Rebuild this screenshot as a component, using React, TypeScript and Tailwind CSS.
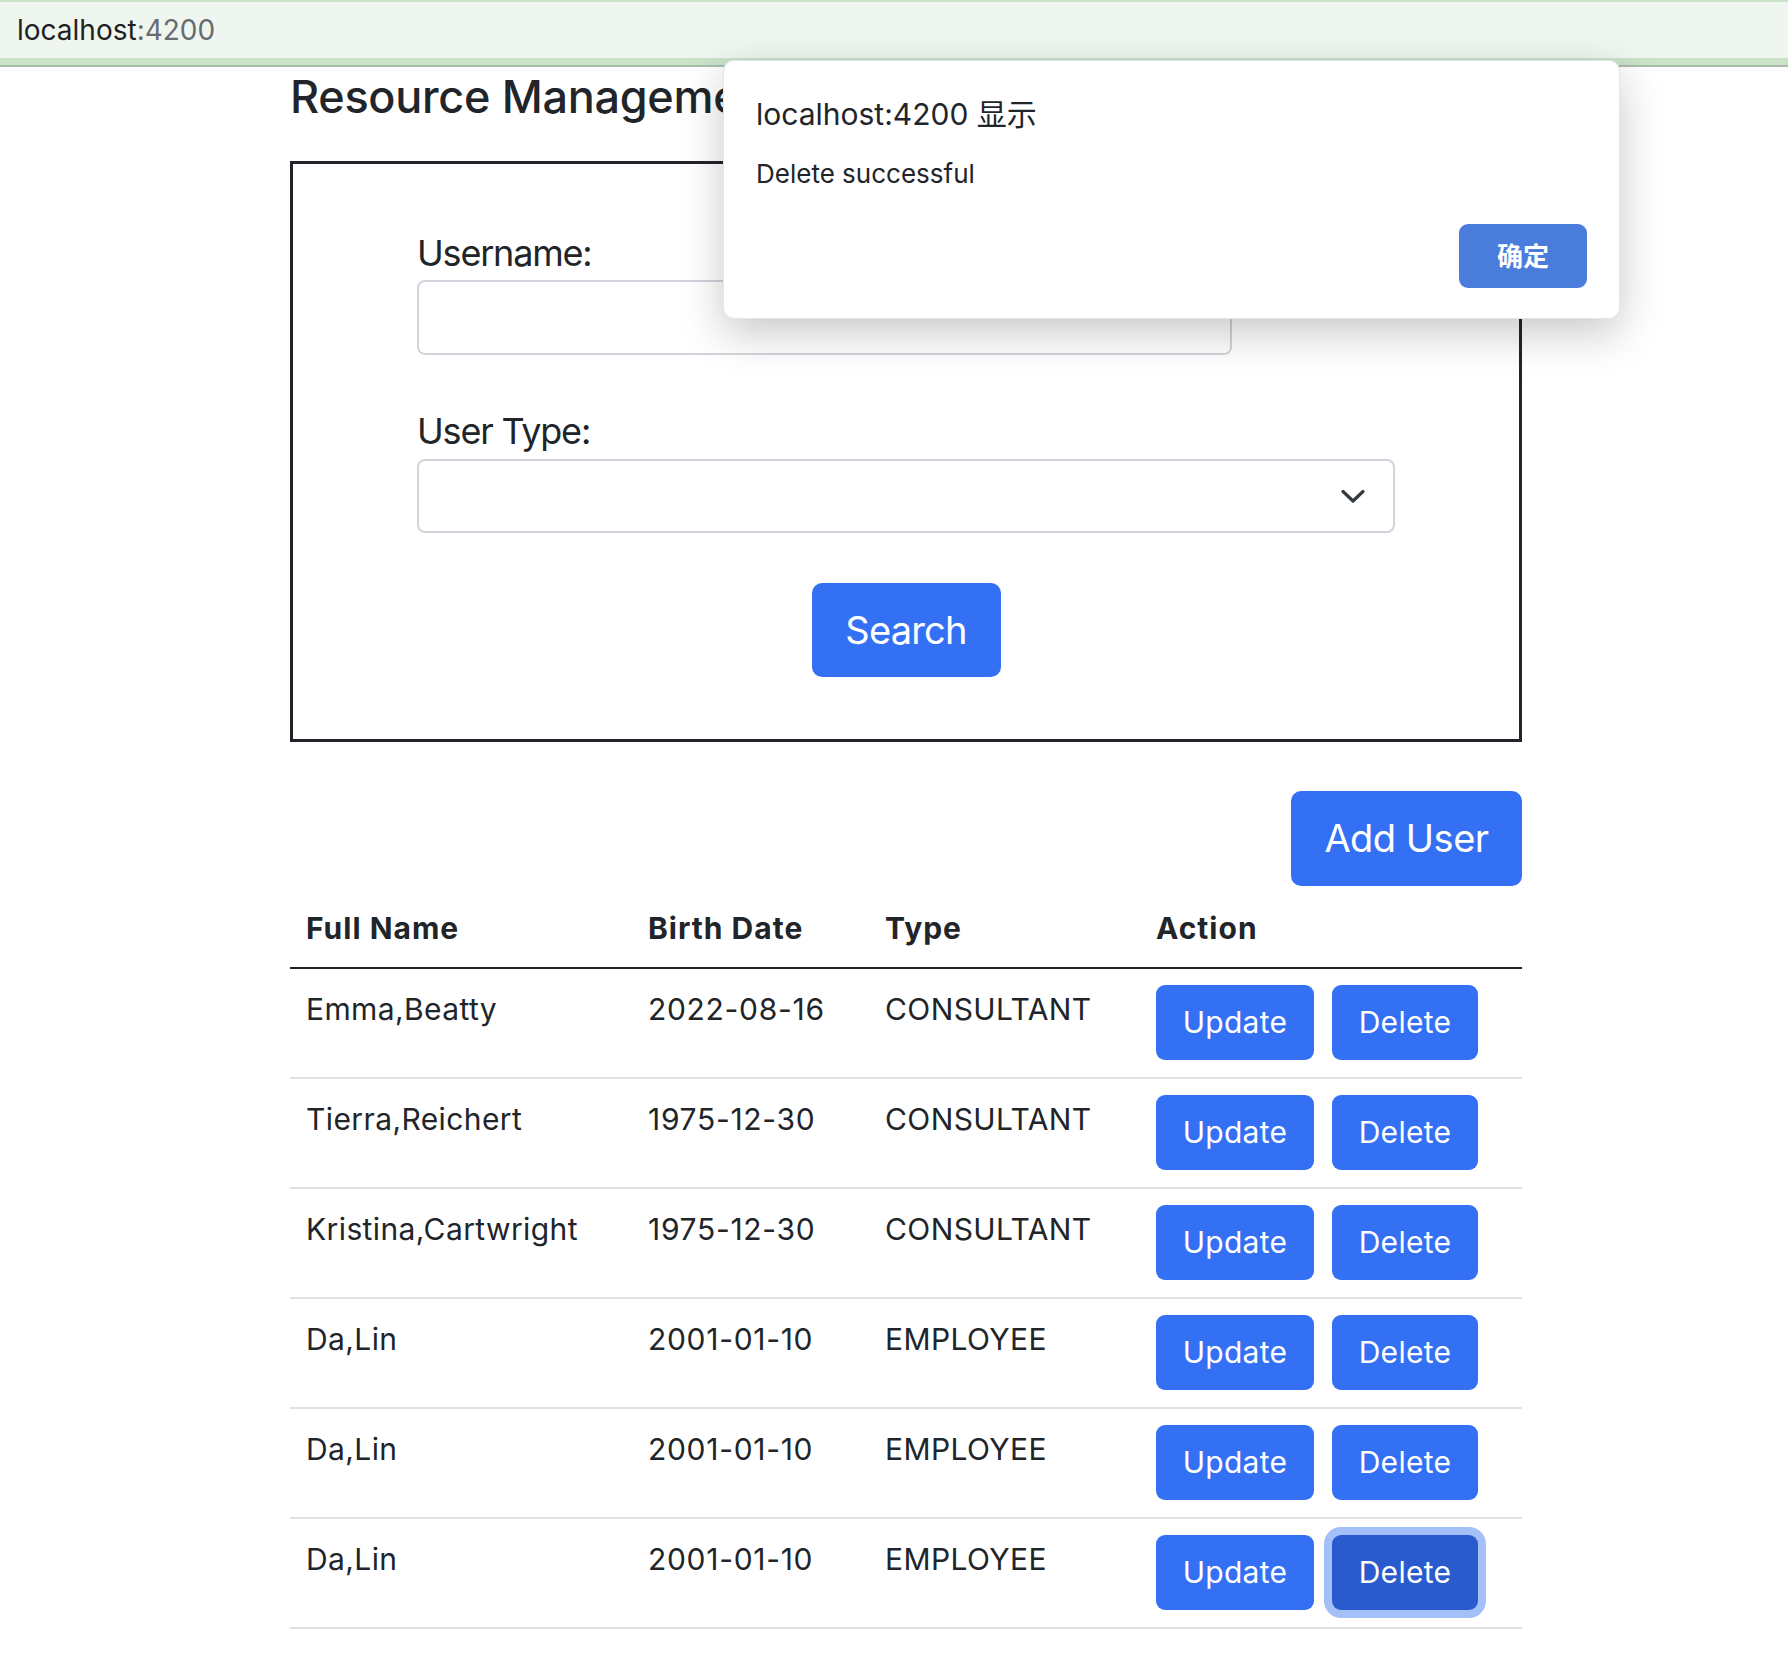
import React from "react";

type Row = { name: string; birth: string; type: string };

const rows: Row[] = [
  { name: "Emma,Beatty", birth: "2022-08-16", type: "CONSULTANT" },
  { name: "Tierra,Reichert", birth: "1975-12-30", type: "CONSULTANT" },
  { name: "Kristina,Cartwright", birth: "1975-12-30", type: "CONSULTANT" },
  { name: "Da,Lin", birth: "2001-01-10", type: "EMPLOYEE" },
  { name: "Da,Lin", birth: "2001-01-10", type: "EMPLOYEE" },
  { name: "Da,Lin", birth: "2001-01-10", type: "EMPLOYEE" },
];

function Chevron() {
  return (
    <svg width="24" height="15" viewBox="0 0 24 15" fill="none">
      <path d="M2 2.5 L12 12 L22 2.5" stroke="#343a40" strokeWidth="3.2" strokeLinecap="round" strokeLinejoin="round" />
    </svg>
  );
}

export default function App() {
  return (
    <div className="relative min-h-[1660px] w-[1788px] bg-white font-['Inter','Noto_Sans_CJK_SC',sans-serif] text-[#212529]">
      {/* browser bar */}
      <header>
        <div className="flex h-[58px] items-center border-t-2 border-[#c9e2c8] bg-[#eff6ef] pl-[17px]">
          <span className="text-[28px] text-[#1f1f1f]">
            localhost<span className="text-[#686c70]">:4200</span>
          </span>
        </div>
        <div className="h-[7px] bg-[#c9e2c8]" />
        <div className="h-[2px] bg-[#a9bca8]" />
      </header>

      <main className="ml-[290px] w-[1232px]">
        <h2 className="mt-[3px] text-[45px] font-medium leading-[54px] tracking-[-0.3px]">Resource Management</h2>

        <div className="mt-[37px] border-[3px] border-[#212529] px-[124px] pt-[62px] pb-[62px]">
          <label className="block text-[36px] leading-[54px] tracking-[-1.2px]">Username:</label>
          <div className="h-[75px] w-[815px] rounded-[8px] border-2 border-[#d0d5db] bg-white" />

          <label className="mt-[49px] block text-[36px] leading-[54px] tracking-[-1.2px]">User Type:</label>
          <div className="mt-[1px] flex h-[74px] w-full items-center justify-end rounded-[8px] border-2 border-[#d0d5db] bg-white pr-[28px]">
            <Chevron />
          </div>

          <div className="mt-[50px] flex justify-center">
            <button className="flex h-[94px] w-[189px] items-center justify-center rounded-[10px] bg-[#3470f4] text-[38px] text-white tracking-[-0.8px]">
              Search
            </button>
          </div>
        </div>

        <div className="mt-[49px] flex justify-end">
          <button className="flex h-[95px] w-[231px] items-center justify-center rounded-[10px] bg-[#3470f4] text-[38px] text-white tracking-[-0.5px]">
            Add User
          </button>
        </div>

        <table className="mt-[2px] w-full table-fixed border-collapse text-left">
          <colgroup>
            <col className="w-[342px]" />
            <col className="w-[237px]" />
            <col className="w-[271px]" />
            <col className="w-[382px]" />
          </colgroup>
          <thead>
            <tr className="border-b-2 border-[#212529]">
              <th className="px-[16px] pt-[16px] pb-[15px] text-[30px] font-bold leading-[48px] tracking-[1px]">Full Name</th>
              <th className="px-[16px] pt-[16px] pb-[15px] text-[30px] font-bold leading-[48px] tracking-[1px]">Birth Date</th>
              <th className="px-[16px] pt-[16px] pb-[15px] text-[30px] font-bold leading-[48px] tracking-[1px]">Type</th>
              <th className="px-[16px] pt-[16px] pb-[15px] text-[30px] font-bold leading-[48px] tracking-[1px]">Action</th>
            </tr>
          </thead>
          <tbody>
            {rows.map((r, i) => {
              const focused = i === rows.length - 1;
              return (
                <tr key={i} className="border-b-2 border-[#dee2e6]">
                  <td className="px-[16px] pt-[16px] pb-[17px] align-top text-[30px] leading-[48px] tracking-[0.4px]">{r.name}</td>
                  <td className="px-[16px] pt-[16px] pb-[17px] align-top text-[30px] leading-[48px] tracking-[0.7px]">{r.birth}</td>
                  <td className="px-[16px] pt-[16px] pb-[17px] align-top text-[30px] leading-[48px] tracking-[0.4px]">{r.type}</td>
                  <td className="px-[16px] pt-[16px] pb-[17px] align-top">
                    <div className="flex gap-[18px]">
                      <button className="flex h-[75px] w-[158px] items-center justify-center rounded-[9px] bg-[#3470f4] text-[30px] tracking-[0.3px] text-white">
                        Update
                      </button>
                      <button
                        className={
                          focused
                            ? "flex h-[75px] w-[146px] items-center justify-center rounded-[9px] bg-[#2a5bcc] text-[30px] tracking-[0.3px] text-white shadow-[0_0_0_8px_#a4c0f8]"
                            : "flex h-[75px] w-[146px] items-center justify-center rounded-[9px] bg-[#3470f4] text-[30px] tracking-[0.3px] text-white"
                        }
                      >
                        Delete
                      </button>
                    </div>
                  </td>
                </tr>
              );
            })}
          </tbody>
        </table>
      </main>

      {/* alert dialog */}
      <div className="absolute left-[723px] top-[60px] flex h-[259px] w-[897px] flex-col rounded-[11px] border border-black/10 bg-white pl-[32px] pr-[32px] pt-[35px] pb-[30px] shadow-[0_14px_44px_rgba(0,0,0,0.22)]">
        <div className="text-[30px] leading-[36px]">localhost:4200 显示</div>
        <div className="mt-[26px] text-[26px] leading-[32px]">Delete successful</div>
        <div className="mt-auto flex justify-end">
          <button className="flex h-[64px] w-[128px] items-center justify-center rounded-[9px] bg-[#4a7cdc] text-[26px] font-bold text-white">
            确定
          </button>
        </div>
      </div>
    </div>
  );
}
